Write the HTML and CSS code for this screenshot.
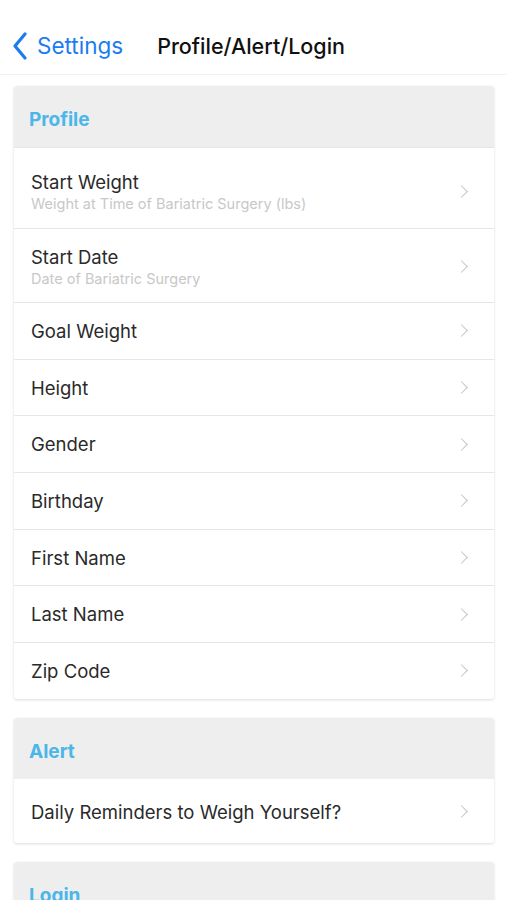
FILE: index.html
```html
<!DOCTYPE html>
<html>
<head>
    <title>Profile/Alert/Login</title>
    <link rel="stylesheet" href="styles.css">
</head>
<body>
    <div class="navbar">
        <a class="back" href="#">
            <svg class="back-icon" width="16" height="28" viewBox="0 0 16 28">
                <path d="M13 2 L3 14 L13 26" fill="none" stroke="#1a7cf0" stroke-width="3.2" stroke-linecap="round" stroke-linejoin="round"/>
            </svg>
            <span>Settings</span>
        </a>
        <div class="title">Profile/Alert/Login</div>
    </div>

    <div class="card">
        <div class="card-header">Profile</div>
        <div class="row tall">
            <div class="text">
                <div class="label">Start Weight</div>
                <div class="sub">Weight at Time of Bariatric Surgery (lbs)</div>
            </div>
            <span class="chev"></span>
        </div>
        <div class="row tall2">
            <div class="text">
                <div class="label">Start Date</div>
                <div class="sub">Date of Bariatric Surgery</div>
            </div>
            <span class="chev"></span>
        </div>
        <div class="row"><div class="label">Goal Weight</div><span class="chev"></span></div>
        <div class="row"><div class="label">Height</div><span class="chev"></span></div>
        <div class="row"><div class="label">Gender</div><span class="chev"></span></div>
        <div class="row"><div class="label">Birthday</div><span class="chev"></span></div>
        <div class="row"><div class="label">First Name</div><span class="chev"></span></div>
        <div class="row"><div class="label">Last Name</div><span class="chev"></span></div>
        <div class="row"><div class="label">Zip Code</div><span class="chev"></span></div>
    </div>

    <div class="card">
        <div class="card-header">Alert</div>
        <div class="row single"><div class="label">Daily Reminders to Weigh Yourself?</div><span class="chev"></span></div>
    </div>

    <div class="card">
        <div class="card-header">Login</div>
    </div>
</body>
</html>
```

FILE: styles.css
```css
body {
    margin: 0;
    font-family: Inter, "Noto Sans", sans-serif;
    background: #fff;
    color: #222;
}
.navbar {
    height: 75px;
    display: flex;
    align-items: center;
    padding-top: 17px;
    border-bottom: 1px solid #f2f2f2;
    box-sizing: border-box;
}
.back {
    display: flex;
    align-items: center;
    text-decoration: none;
    color: #1a7cf0;
    font-size: 22.5px;
    margin-left: 12px;
}
.back-icon {
    margin-right: 9px;
}
.title {
    margin-left: 34px;
    font-size: 21.5px;
    font-weight: 500;
    color: #111;
}
.card {
    margin: 11px 13px 19px 14px;
    background: #fff;
    border-radius: 3px;
    box-shadow: 0 1px 3px rgba(0,0,0,0.14);
    overflow: hidden;
}
.card-header {
    background: #eeeeee;
    height: 61px;
    line-height: 67px;
    padding-left: 15px;
    font-size: 19px;
    font-weight: 700;
    color: #4ab6ea;
}
.row {
    display: flex;
    align-items: center;
    justify-content: space-between;
    height: 55.7px;
    border-top: 1px solid #e6e6e6;
    padding: 0 28px 0 17px;
}
.row.tall {
    height: 81px;
    padding-top: 6px;
    box-sizing: border-box;
}
.row.tall2 {
    height: 74px;
    padding-top: 2px;
    box-sizing: border-box;
}
.row.single {
    height: 64px;
    border-top: none;
    padding-top: 2px;
    box-sizing: border-box;
}
.label {
    font-size: 18.5px;
    color: #2a2a2a;
}
.sub {
    font-size: 14.5px;
    color: #c8c8c8;
    margin-top: 2px;
}
.chev {
    width: 8px;
    height: 8px;
    border-top: 1.5px solid #c4c4c4;
    border-right: 1.5px solid #c4c4c4;
    transform: rotate(45deg);
}
```
